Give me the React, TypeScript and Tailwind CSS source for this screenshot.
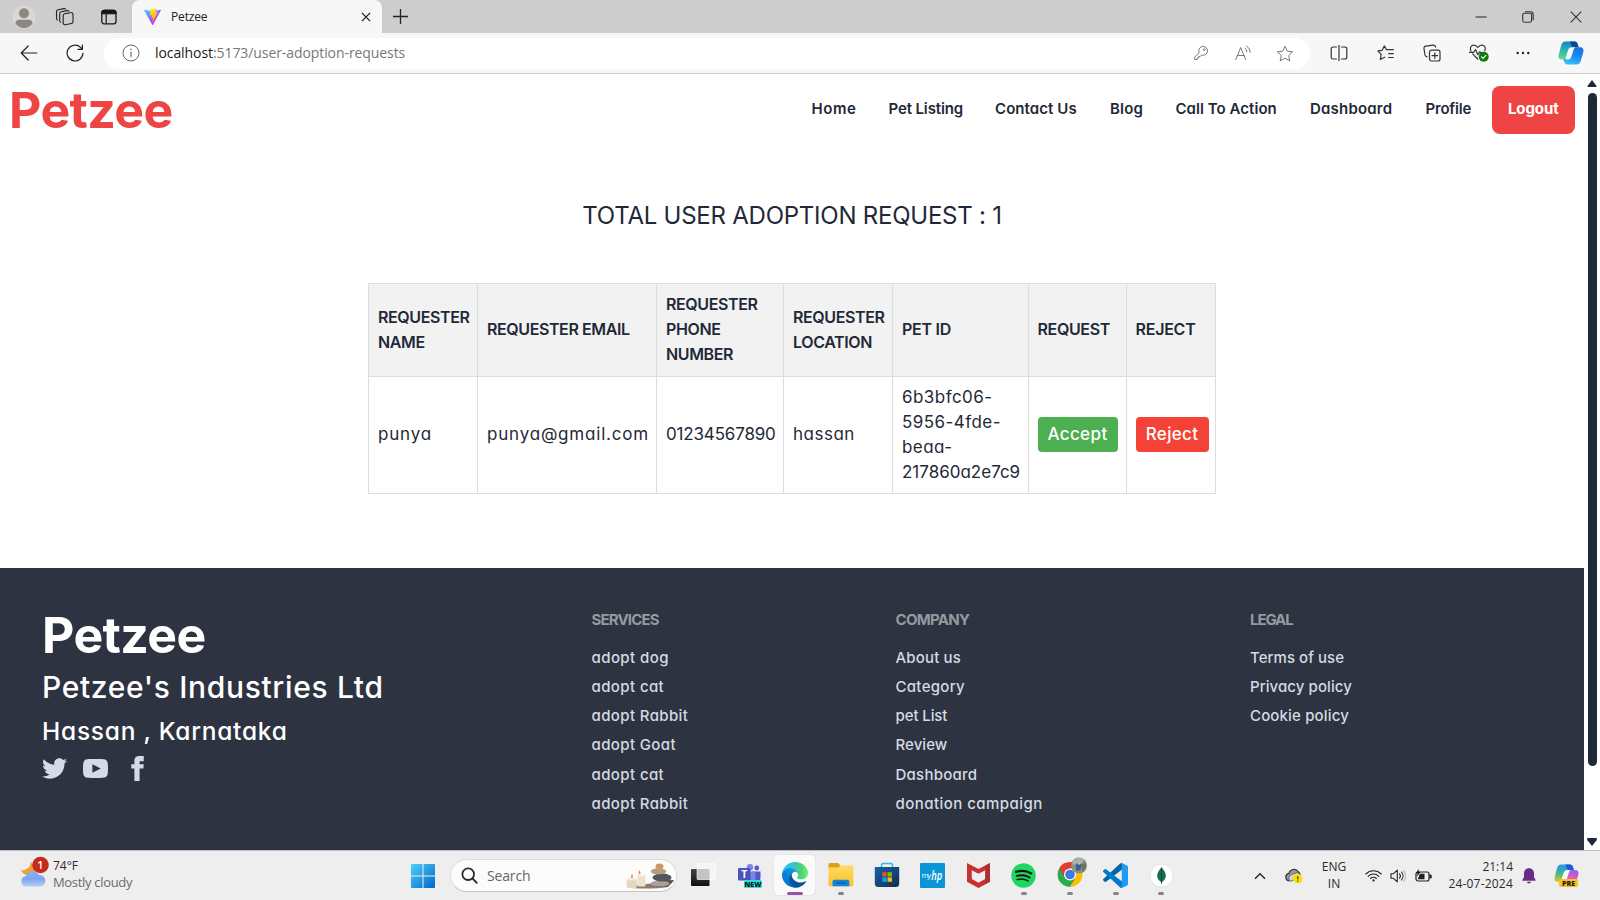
import type { ReactNode } from 'react';

const ui = "font-['Open_Sans','Noto_Sans',sans-serif]";

const navLinks = [
  { label: 'Home', cls: 'w-[77px] tracking-[0.6px]' },
  { label: 'Pet Listing', cls: 'w-[106.5px] tracking-[-0.13px]' },
  { label: 'Contact Us', cls: 'w-[115px] tracking-[0.08px]' },
  { label: 'Blog', cls: 'w-[65.5px] tracking-[0.2px]' },
  { label: 'Call To Action', cls: 'w-[134.5px] tracking-[0.05px]' },
  { label: 'Dashboard', cls: 'w-[115.5px] tracking-[0.2px]' },
  { label: 'Profile', cls: 'w-[66px] tracking-[-0.2px]' },
];

const headings = [
  { label: 'REQUESTER NAME', cls: 'w-[109px] tracking-[-0.38px]' },
  { label: 'REQUESTER EMAIL', cls: 'w-[179px] tracking-[-0.4px]' },
  { label: 'REQUESTER PHONE NUMBER', cls: 'w-[127px] tracking-[-0.38px]' },
  { label: 'REQUESTER LOCATION', cls: 'w-[109px] tracking-[-0.38px]' },
  { label: 'PET ID', cls: 'w-[135.5px] tracking-[-0.25px]' },
  { label: 'REQUEST', cls: 'w-[98px] tracking-[-0.35px]' },
  { label: 'REJECT', cls: 'w-[89.5px] tracking-[-0.25px]' },
];

const footerColumns = [
  {
    title: 'SERVICES',
    cls: 'w-[304px]',
    titleCls: 'tracking-[-0.85px]',
    links: [
      { label: 'adopt dog', cls: 'tracking-[0.42px]' },
      { label: 'adopt cat', cls: 'tracking-[0.4px]' },
      { label: 'adopt Rabbit', cls: 'tracking-[0.38px]' },
      { label: 'adopt Goat', cls: 'tracking-[0.38px]' },
      { label: 'adopt cat', cls: 'tracking-[0.4px]' },
      { label: 'adopt Rabbit', cls: 'tracking-[0.38px]' },
    ],
  },
  {
    title: 'COMPANY',
    cls: 'w-[354.5px]',
    titleCls: 'tracking-[-0.7px]',
    links: [
      { label: 'About us', cls: 'tracking-[0.17px]' },
      { label: 'Category', cls: 'tracking-[0.3px]' },
      { label: 'pet List', cls: 'tracking-[-0.1px]' },
      { label: 'Review', cls: 'tracking-[0.05px]' },
      { label: 'Dashboard', cls: 'tracking-[0.25px]' },
      { label: 'donation campaign', cls: 'tracking-[0.46px]' },
    ],
  },
  {
    title: 'LEGAL',
    cls: '',
    titleCls: 'tracking-[-1.1px]',
    links: [
      { label: 'Terms of use', cls: 'tracking-[0.05px]' },
      { label: 'Privacy policy', cls: 'tracking-[0.07px]' },
      { label: 'Cookie policy', cls: 'tracking-[0.15px]' },
    ],
  },
];

function Slot({ cls, children }: { cls: string; children: ReactNode }) {
  return <div className={`flex shrink-0 items-center justify-center ${cls}`}>{children}</div>;
}

/* ---------- browser icons ---------- */

const line = { fill: 'none', stroke: '#222', strokeWidth: 1.2, strokeLinecap: 'round', strokeLinejoin: 'round' } as const;

function Avatar() {
  return (
    <svg width="24" height="24" viewBox="0 0 24 24">
      <defs>
        <clipPath id="av"><circle cx="12" cy="12" r="11.5" /></clipPath>
      </defs>
      <circle cx="12" cy="12" r="11.5" fill="#dad7d4" />
      <g clipPath="url(#av)" fill="#8b8783">
        <circle cx="12" cy="8.3" r="5" />
        <path d="M3.500 18.500c0-2.200 1.600-3.700 4-3.700h9c2.400 0 4 1.500 4 3.700-1.700 2.700-4.900 4.500-8.500 4.500s-6.800-1.800-8.500-4.500z" />
      </g>
    </svg>
  );
}

function Workspaces() {
  return (
    <svg width="20" height="20" viewBox="0 0 20 20" {...line} strokeWidth={1.1}>
      <path d="M9.600 6.800l6.200-1.200a1.800 1.800 0 0 1 2.200 1.700v7.200a2 2 0 0 1-1.600 2l-6 1.200a1.800 1.800 0 0 1-2.200-1.800V8.800a2 2 0 0 1 1.400-2z" />
      <path d="M5.700 15.300a1.800 1.800 0 0 1-1-1.700V6.800a2 2 0 0 1 1.600-2l5.900-1.200a1.800 1.800 0 0 1 1.700.6" />
      <path d="M2.500 13a1.800 1.800 0 0 1-1-1.700V4.800a2 2 0 0 1 1.600-2L9 1.600a1.800 1.800 0 0 1 1.600.5" />
    </svg>
  );
}

function VerticalTabs() {
  return (
    <svg width="16" height="16" viewBox="0 0 16 16">
      <rect x=".8" y="1.300" width="14.200" height="13.500" rx="2.200" fill="none" stroke="#161616" strokeWidth="1.300" />
      <path d="M.8 4.800V3.500A2.300 2.300 0 0 1 3.100 1.200h9.600A2.300 2.300 0 0 1 15 3.500v1.300z" fill="#161616" stroke="#161616" strokeWidth="1" />
      <path d="M5.200 5v9.500" stroke="#161616" strokeWidth="1.200" />
    </svg>
  );
}

function ViteLogo() {
  return (
    <svg width="17" height="17" viewBox="0 0 256 257">
      <defs>
        <linearGradient id="v1" x1="-.8%" x2="57.600%" y1="7.700%" y2="78.400%">
          <stop offset="0" stopColor="#41d1ff" />
          <stop offset="1" stopColor="#bd34fe" />
        </linearGradient>
        <linearGradient id="v2" x1="43.400%" x2="50.300%" y1="2.200%" y2="89%">
          <stop offset="0" stopColor="#ffea83" />
          <stop offset=".083" stopColor="#ffdd35" />
          <stop offset="1" stopColor="#ffa800" />
        </linearGradient>
      </defs>
      <path fill="url(#v1)" d="M255.153 37.938L134.897 252.976c-2.483 4.440-8.862 4.466-11.382.048L.875 37.958c-2.746-4.814 1.371-10.646 6.827-9.670l120.385 21.517a6.537 6.537 0 0 0 2.322-.004l117.867-21.483c5.438-.991 9.574 4.796 6.877 9.620z" />
      <path fill="url(#v2)" d="M185.432.063L96.440 17.501a3.268 3.268 0 0 0-2.634 3.014l-5.474 92.456a3.268 3.268 0 0 0 3.997 3.378l24.777-5.718c2.318-.535 4.413 1.507 3.936 3.838l-7.361 36.047c-.495 2.426 1.782 4.500 4.151 3.780l15.304-4.649c2.372-.720 4.652 1.360 4.150 3.788l-11.698 56.621c-.732 3.542 3.979 5.473 5.943 2.437l1.313-2.028l72.516-144.720c1.215-2.423-.880-5.186-3.540-4.672l-25.505 4.922c-2.396.462-4.435-1.770-3.759-4.114l16.646-57.705c.677-2.350-1.370-4.583-3.769-4.113z" />
    </svg>
  );
}

function CopilotMark({ size, pre = false }: { size: number; pre?: boolean }) {
  return (
    <svg width={size} height={size} viewBox="0 0 26 26">
      <defs>
        <linearGradient id={pre ? 'cpA' : 'cA'} x1=".3" y1="0" x2=".2" y2="1">
          <stop offset="0" stopColor={pre ? '#1f9bf0' : '#1487c9'} />
          <stop offset=".5" stopColor={pre ? '#43b58c' : '#2cb9b0'} />
          <stop offset="1" stopColor={pre ? '#d9c62c' : '#64d98b'} />
        </linearGradient>
        <linearGradient id={pre ? 'cpB' : 'cB'} x1=".7" y1="0" x2=".4" y2="1">
          <stop offset="0" stopColor={pre ? '#9c5cf2' : '#1a6fe0'} />
          <stop offset=".55" stopColor={pre ? '#e763b4' : '#1e8cf2'} />
          <stop offset="1" stopColor={pre ? '#f79a4a' : '#35c3f4'} />
        </linearGradient>
      </defs>
      <path d="M7.500 1.500h9c2 0 2.700 1.100 3.200 2.700l.9 3.100h-3.400c-1.900 0-2.800 1-3.400 2.800l-2.300 7.200c-.5 1.600-1.500 2.300-3.100 2.300H4.200C1.300 19.600 0 17.600.7 14.700L3.200 5.300C3.900 2.800 5.100 1.500 7.500 1.500z" fill={pre ? 'url(#cpA)' : 'url(#cA)'} />
      <path d="M11.800 1.500h4.700c2 0 2.700 1.100 3.200 2.700l.9 3.100h-3.400c-1.200 0-2 .4-2.600 1.200z" fill={pre ? '#2455d6' : '#0c4a94'} />
      <path d="M18.500 24.500h-9c-2 0-2.700-1.100-3.200-2.700l-.9-2.700h3.400c1.900 0 2.800-1 3.400-2.800l2.300-6.700c.5-1.600 1.500-2.300 3.100-2.300h4.200c2.900 0 4.200 2 3.500 4.900l-2.500 8.500c-.7 2.500-1.900 3.800-4.300 3.800z" fill={pre ? 'url(#cpB)' : 'url(#cB)'} />
      <path d="M14.300 7.300h2.900c-1.200.9-1.600 2.200-2.100 3.900l-1.700 5.300c-.6 1.900-1.700 2.900-3.500 2.900H8.700c-.9 0-1.400-.6-1.100-1.500l2.300-7.300c.7-2.200 2.200-3.300 4.400-3.300z" fill="#f4fbff" />
    </svg>
  );
}

function BrowserTabs() {
  return (
    <div className={`flex h-[33px] bg-[#cdcdcd] ${ui}`}>
      <Slot cls="w-[47px]"><Avatar /></Slot>
      <Slot cls="w-[36px]"><Workspaces /></Slot>
      <Slot cls="w-[49px] pl-0.5"><VerticalTabs /></Slot>
      <div className="flex w-[250px] items-center rounded-t-lg bg-[#f7f7f7] pl-[12px] pr-[11px]">
        <ViteLogo />
        <span className="ml-[10px] text-[12px] leading-none tracking-[-0.15px] text-[#222]">Petzee</span>
        <svg className="ml-auto" width="10" height="10" viewBox="0 0 10 10" stroke="#222" strokeWidth="1.300"><path d="M.9.9l8.200 8.200M9.100.9L.9 9.100" /></svg>
      </div>
      <Slot cls="w-[37px]">
        <svg width="15" height="15" viewBox="0 0 15 15" stroke="#222" strokeWidth="1.300"><path d="M7.500 0v15M0 7.500h15" /></svg>
      </Slot>
      <Slot cls="ml-auto w-[47px]"><svg width="12" height="12" viewBox="0 0 12 12" stroke="#333" strokeWidth="1.100"><path d="M.5 6h11" /></svg></Slot>
      <Slot cls="w-[48px]">
        <svg width="12" height="12" viewBox="0 0 12 12" fill="none" stroke="#333" strokeWidth="1.100">
          <rect x=".7" y="2.300" width="8.900" height="8.900" rx="1.600" />
          <path d="M2.800.8h5.700c1.600 0 2.700 1.100 2.700 2.700v5.800" />
        </svg>
      </Slot>
      <Slot cls="w-[48px]"><svg width="12" height="12" viewBox="0 0 12 12" stroke="#333" strokeWidth="1.100"><path d="M.7.7l10.600 10.600M11.300.7L.7 11.300" /></svg></Slot>
    </div>
  );
}

const star = 'M9 1.200l2.300 5 5.300.6-3.900 3.700 1.100 5.400L9 13.200l-4.800 2.700 1.100-5.400L1.400 6.800l5.300-.6z';

function Toolbar() {
  return (
    <div className={`flex h-[41px] items-center border-b border-[#cfcfcf] bg-[#f7f7f7] ${ui}`}>
      <Slot cls="w-[58px]">
        <svg width="18" height="16" viewBox="0 0 18 16" {...line}><path d="M8.200 1L1.200 8l7 7M1.200 8h15.600" /></svg>
      </Slot>
      <Slot cls="w-[34px]">
        <svg width="18" height="18" viewBox="0 0 18 18" {...line}><path d="M16.900 9.300A7.900 7.900 0 1 1 14.500 3.400L16.200 5.200M16.400 1v4.400H12" /></svg>
      </Slot>
      <div className="ml-[12px] flex h-[31px] w-[1206px] items-center rounded-full bg-white">
        <Slot cls="w-[54px]">
          <svg width="18" height="18" viewBox="0 0 18 18" fill="none" stroke="#666" strokeWidth="1">
            <circle cx="9" cy="9" r="8" />
            <path d="M9 7.800v5" strokeWidth="1.200" />
            <circle cx="9" cy="5.300" r=".8" fill="#666" stroke="none" />
          </svg>
        </Slot>
        <span className="-ml-[3px] text-[14px] leading-none tracking-[-0.08px] text-[#777]">
          <span className="text-[#1b1b1b]">localhost</span>:5173/user-adoption-requests
        </span>
        <Slot cls="ml-auto w-[42px]">
          <svg width="16" height="16" viewBox="0 0 16 16" fill="none" stroke="#777" strokeWidth="1" strokeLinejoin="round">
            <path d="M6.200 7.800a4.400 4.400 0 1 1 2.500 2.200L7.300 11.400H5.800v1.500H4.300v1.500H1.400v-2z" />
            <circle cx="11.300" cy="4.600" r=".9" />
          </svg>
        </Slot>
        <Slot cls="w-[42px]">
          <svg width="17" height="16" viewBox="0 0 17 16" fill="none" stroke="#777" strokeWidth="1" strokeLinecap="round">
            <path d="M.8 14.500L5.700 2.500l4.900 12M2.500 10.500h6.400" />
            <path d="M10.300 3.400a5 5 0 0 1 1.600 3.400M11.700 1a8.300 8.300 0 0 1 3.600 6.400" />
          </svg>
        </Slot>
        <Slot cls="mr-[5px] w-[41px]">
          <svg width="18" height="17" viewBox="0 0 18 17" fill="none" stroke="#777" strokeWidth="1" strokeLinejoin="round"><path d={star} /></svg>
        </Slot>
      </div>
      <Slot cls="ml-[6px] w-[46px]">
        <svg width="18" height="16" viewBox="0 0 18 16" {...line} stroke="#333">
          <path d="M6.400 2H3a1.800 1.800 0 0 0-1.800 1.800v8.400A1.800 1.800 0 0 0 3 14h3.400M11.600 2H15a1.800 1.800 0 0 1 1.800 1.800v8.400A1.800 1.800 0 0 1 15 14h-3.400M9 0v16" />
        </svg>
      </Slot>
      <Slot cls="w-[47px]">
        <svg width="18" height="16" viewBox="0 0 18 16" {...line} stroke="#333">
          <path d="M9.500 4.700L7.300.9 5.200 5.300.9 5.900l3.200 3.400-.8 5.200 4.300-2.300M9.500 4.700h6.800M11.600 8.600h4.700M11.600 12.500h4.700" />
        </svg>
      </Slot>
      <Slot cls="w-[46px]">
        <svg width="18" height="18" viewBox="0 0 18 18" {...line} stroke="#333">
          <rect x="6.500" y="6.200" width="10.500" height="10.800" rx="2" />
          <path d="M11.800 8.800v5.600M9 11.600h5.600M4 12.800C2.600 12.400 2.200 11.800 2 10.900L1 4.500c-.2-1.300.5-2.200 1.700-2.400l7.500-1c1.300-.2 2.200.5 2.500 2" />
        </svg>
      </Slot>
      <Slot cls="w-[46px] pl-0.5">
        <svg width="20" height="18" viewBox="0 0 20 18" {...line} stroke="#333">
          <path d="M2 7C.5 3.600 2.300 1.200 4.900 1.200c1.900 0 2.900 1 3.900 2.300 1-1.300 2-2.300 3.900-2.300 2.600 0 4.500 2.400 3 5.500M3.600 9.800l5.200 5.200M.5 8.300h4.300l1.700-2.800 2.400 5.200 1.800-3 .8.900h3" />
          <circle cx="14.700" cy="12.700" r="5" fill="#0f7b0f" stroke="none" />
          <path d="M12.500 12.800l1.500 1.500 2.900-2.900" stroke="#fff" />
        </svg>
      </Slot>
      <Slot cls="w-[43px]">
        <svg width="14" height="4" viewBox="0 0 14 4" fill="#222"><circle cx="1.700" cy="2" r="1.200" /><circle cx="7" cy="2" r="1.200" /><circle cx="12.300" cy="2" r="1.200" /></svg>
      </Slot>
      <Slot cls="w-[54px]"><CopilotMark size={26} /></Slot>
    </div>
  );
}

/* ---------- page ---------- */

function Navbar() {
  return (
    <header className="flex h-[72px] items-center pl-[9px]">
      <a className="text-[50px] font-bold leading-none tracking-[-0.6px] text-[#ef4444]">Petzee</a>
      <nav className="ml-auto mr-[9px] flex items-center text-[15px] font-semibold text-[#1f2937]">
        {navLinks.map((l) => (
          <a key={l.label} className={`-mt-px whitespace-nowrap ${l.cls}`}>{l.label}</a>
        ))}
        <button className="h-[48px] w-[83.500px] rounded-lg bg-[#ef4444] pb-px text-[15px] font-bold tracking-[-0.1px] text-white">Logout</button>
      </nav>
    </header>
  );
}

const cell = 'border border-[#dddddd] pl-[9px] pr-[7px] text-left align-middle';

function Requests() {
  return (
    <main className="h-[422px] pt-[52px]">
      <h1 className="text-center text-[24px] leading-[36px] tracking-[-0.24px] text-[#1f2937]">TOTAL USER ADOPTION REQUEST : 1</h1>
      <table className="ml-[368px] mt-[49px] w-[847px] table-fixed border-collapse text-[#1f2937]">
        <thead>
          <tr className="h-[92.500px] bg-[#f2f2f2] text-[16px] font-semibold leading-[25px]">
            {headings.map((h) => (
              <th key={h.label} className={`${cell} font-semibold ${h.cls}`}>{h.label}</th>
            ))}
          </tr>
        </thead>
        <tbody>
          <tr className="h-[117px] text-[17px] leading-[25px]">
            <td className={`${cell} tracking-[0.8px]`}>punya</td>
            <td className={`${cell} whitespace-nowrap tracking-[0.8px]`}>punya@gmail.com</td>
            <td className={`${cell} whitespace-nowrap tracking-[-0.17px]`}>01234567890</td>
            <td className={`${cell} tracking-[0.5px]`}>hassan</td>
            <td className={`${cell} whitespace-nowrap tracking-[0.45px]`}>
              <div>6b3bfc06-</div>
              <div>5956-4fde-</div>
              <div>beaa-</div>
              <div className="tracking-[0px]">217860a2e7c9</div>
            </td>
            <td className={cell}>
              <button className="block h-[35px] w-[80px] rounded bg-[#4caf50] font-medium tracking-[0.4px] text-white">Accept</button>
            </td>
            <td className={`${cell} pl-[8px]`}>
              <button className="block h-[35px] w-[73px] rounded bg-[#f44336] font-medium tracking-[0.31px] text-white">Reject</button>
            </td>
          </tr>
        </tbody>
      </table>
    </main>
  );
}

function Footer() {
  return (
    <footer className="flex h-[282px] bg-[#2d3340] pl-[42px] text-white">
      <div className="w-[549.500px] pt-[42px]">
        <div className="text-[50px] font-bold leading-[50px] tracking-[-0.6px]">Petzee</div>
        <div className="mt-[8px] text-[30px] font-medium leading-[38px] tracking-[0.65px]">Petzee's Industries Ltd</div>
        <div className="mt-[7px] text-[24.500px] font-medium leading-[36px] tracking-[0.75px]">Hassan , Karnataka</div>
        <div className="mt-[7px] flex gap-[16.300px] text-[#d5dbe5]">
          <svg width="25" height="25" viewBox="0 0 24 24" fill="currentColor">
            <path d="M24 4.557c-.883.392-1.832.656-2.828.775 1.017-.609 1.798-1.574 2.165-2.724-.951.564-2.005.974-3.127 1.195-.897-.957-2.178-1.555-3.594-1.555-3.179 0-5.515 2.966-4.797 6.045-4.091-.205-7.719-2.165-10.148-5.144-1.290 2.213-.669 5.108 1.523 6.574-.806-.026-1.566-.247-2.229-.616-.054 2.281 1.581 4.415 3.949 4.890-.693.188-1.452.232-2.224.084.626 1.956 2.444 3.379 4.600 3.419-2.070 1.623-4.678 2.348-7.290 2.040 2.179 1.397 4.768 2.212 7.548 2.212 9.142 0 14.307-7.721 13.995-14.646.962-.695 1.797-1.562 2.457-2.549z" />
          </svg>
          <svg width="25" height="25" viewBox="0 0 24 24" fill="currentColor">
            <path d="M19.615 3.184c-3.604-.246-11.631-.245-15.230 0-3.897.266-4.356 2.620-4.385 8.816.029 6.185.484 8.549 4.385 8.816 3.600.245 11.626.246 15.230 0 3.897-.266 4.356-2.620 4.385-8.816-.029-6.185-.484-8.549-4.385-8.816zm-10.615 12.816v-8l8 3.993-8 4.007z" />
          </svg>
          <svg width="25" height="25" viewBox="0 0 24 24" fill="currentColor">
            <path d="M9 8h-3v4h3v12h5v-12h3.642l.358-4h-4v-1.667c0-.955.192-1.333 1.115-1.333h2.885v-5h-3.808c-3.596 0-5.192 1.583-5.192 4.615v3.385z" />
          </svg>
        </div>
      </div>
      {footerColumns.map((c) => (
        <div key={c.title} className={`whitespace-nowrap pt-[42px] text-[15px] ${c.cls}`}>
          <h2 className={`mb-[13px] font-bold leading-[20px] text-[#969aa0] ${c.titleCls}`}>{c.title}</h2>
          {c.links.map((l, i) => (
            <div key={i} className={`h-[29.150px] font-medium leading-[30px] text-[#d5dae3] ${l.cls}`}>{l.label}</div>
          ))}
        </div>
      ))}
    </footer>
  );
}

function Scrollbar() {
  return (
    <div className="flex w-[16px] flex-col items-center bg-white pb-[4px] pt-[6px]">
      <svg width="10" height="7" viewBox="0 0 10 7" fill="#1f2937"><path d="M5 0L9.500 6v1h-9V6z" /></svg>
      <div className="mt-[6px] h-[673px] w-[9px] rounded-full bg-[#1f2937]" />
      <svg className="mt-auto" width="10" height="8" viewBox="0 0 10 8" fill="#1f2937"><path d="M5 8L9.800 2V0H.2v2z" /></svg>
    </div>
  );
}

/* ---------- taskbar ---------- */

function TaskbarApp({ children, mark = '', tile = false }: { children?: ReactNode; mark?: string; tile?: boolean }) {
  return (
    <div className="flex w-[45.800px] shrink-0 justify-center">
      <div className={`mt-[4px] flex h-[40px] w-[41px] flex-col items-center rounded ${tile ? 'bg-[#fafafa] shadow-[0_0_1px_#aaa]' : ''}`}>
        <div className="flex h-[37px] items-center justify-center pt-[3px]">{children}</div>
        <div className={`h-[3px] rounded-full ${mark}`} />
      </div>
    </div>
  );
}

const dot = 'w-[6px] bg-[#858585]';

function Weather() {
  return (
    <svg width="29" height="32" viewBox="0 0 29 32">
      <defs><linearGradient id="cl" x1="0" y1="0" x2="0" y2="1"><stop offset="0" stopColor="#8bb0ee" /><stop offset=".5" stopColor="#7ea6ee" /><stop offset="1" stopColor="#b4cffa" /></linearGradient></defs>
      <path d="M10.500 5.500c.7 5-3 9-9.500 8.800 1.500 3 4 5 8 5s6-2 7-6z" fill="#f0a02c" />
      <path d="M6 30.500a5.200 5.200 0 0 1-.3-10.300A7.300 7.300 0 0 1 19 19a5.800 5.800 0 0 1 1.500 11.500z" fill="url(#cl)" />
      <circle cx="20.500" cy="9" r="8.300" fill="#c42b1c" />
      <text x="20.500" y="13" fontSize="11" fontWeight="600" fill="#fff" textAnchor="middle" fontFamily="Open Sans">1</text>
    </svg>
  );
}

function WindowsLogo() {
  return (
    <svg width="24" height="24" viewBox="0 0 24 24">
      <defs><linearGradient id="wn" gradientUnits="userSpaceOnUse" x1="0" y1="0" x2="24" y2="24"><stop offset="0" stopColor="#4fd0fb" /><stop offset="1" stopColor="#0067c7" /></linearGradient></defs>
      <path fill="url(#wn)" d="M1 0h10.500v11.500H0V1a1 1 0 0 1 1-1zM12.500 0H23a1 1 0 0 1 1 1v10.500H12.500zM0 12.500h11.500V24H1a1 1 0 0 1-1-1zM12.500 12.500H24V23a1 1 0 0 1-1 1H12.500z" />
    </svg>
  );
}

function SearchArt() {
  return (
    <svg width="48" height="26" viewBox="0 0 48 26">
      <path d="M1 24.500c10-3 20-4 27-4l10-6 10 3-6 6.500c-12 2-30 2-41 .5z" fill="#8d7c69" />
      <path d="M34 17l14 .5-6 6-12 .5z" fill="#5c5148" />
      <rect x=".8" y="16" width="10" height="9" rx="1" fill="#e3d6bd" />
      <rect x="11.500" y="12" width="8" height="11.500" rx="1" fill="#ece1cb" />
      <ellipse cx="5.800" cy="16.300" rx="5" ry="1.300" fill="#f3ead8" />
      <ellipse cx="15.500" cy="12.300" rx="4" ry="1.100" fill="#f6eee0" />
      <path d="M6 11c1.300 2 1.400 4 0 4.500-1.400-.5-1.300-2.500 0-4.500zM13.500 7c1.300 2 1.400 4 0 4.500-1.400-.5-1.300-2.500 0-4.500z" fill="#f08b3e" />
      <ellipse cx="34" cy="20.500" rx="9.500" ry="3" fill="#a8a29b" />
      <ellipse cx="36" cy="14.500" rx="9.500" ry="4" fill="#53565c" />
      <ellipse cx="32.500" cy="8.300" rx="7.800" ry="3" fill="#b59d80" />
      <ellipse cx="33.500" cy="3.500" rx="4" ry="3" fill="#c79b63" />
    </svg>
  );
}

function TaskView() {
  return (
    <svg width="26" height="26" viewBox="0 0 26 26">
      <defs><linearGradient id="tv" x1="0" y1="0" x2="0" y2="1"><stop offset="0" stopColor="#424242" /><stop offset="1" stopColor="#111" /></linearGradient></defs>
      <rect x="1" y="7" width="18.500" height="17" rx="1" fill="url(#tv)" />
      <rect x="7" y="1.500" width="18.500" height="16" rx="1" fill="#f5f5f5" stroke="#fff" strokeWidth=".6" />
      <path d="M7.300 7h12.200v10.200H7.300z" fill="#c4c4c4" />
    </svg>
  );
}

function Teams() {
  return (
    <svg width="25" height="25" viewBox="0 0 25 25">
      <circle cx="13" cy="4.200" r="3.200" fill="#7b83eb" />
      <circle cx="19.800" cy="5" r="2.400" fill="#5059c9" />
      <path d="M15 8.500h8.500v6.500a5 5 0 0 1-5 5H15z" fill="#5059c9" />
      <path d="M8 8.500h10.500v7a5.200 5.200 0 0 1-10.500 0z" fill="#7b83eb" />
      <rect x="1" y="5" width="12.500" height="12.500" rx="1" fill="#4b53bc" />
      <text x="7.200" y="15" fontSize="10.500" fontWeight="700" fill="#fff" textAnchor="middle" fontFamily="Open Sans">T</text>
      <rect x="7" y="17" width="18" height="8" rx="1.500" fill="#2ee0d8" />
      <text x="16" y="23.700" fontSize="7" fontWeight="800" fill="#111" textAnchor="middle" fontFamily="Open Sans">NEW</text>
    </svg>
  );
}

function Edge() {
  return (
    <svg width="26" height="26" viewBox="0 0 256 256">
      <defs>
        <linearGradient id="e1" gradientUnits="userSpaceOnUse" x1="63" y1="177" x2="241" y2="177"><stop offset="0" stopColor="#0c59a4" /><stop offset="1" stopColor="#114a8b" /></linearGradient>
        <linearGradient id="e2" gradientUnits="userSpaceOnUse" x1="157" y1="100" x2="46" y2="221"><stop offset="0" stopColor="#1b9de2" /><stop offset=".16" stopColor="#1595df" /><stop offset=".67" stopColor="#0680d7" /><stop offset="1" stopColor="#0078d4" /></linearGradient>
        <linearGradient id="e3" gradientUnits="userSpaceOnUse" x1="10" y1="90" x2="240" y2="90"><stop offset="0" stopColor="#35c1f1" /><stop offset=".35" stopColor="#2fc2df" /><stop offset=".75" stopColor="#48d07a" /><stop offset="1" stopColor="#66eb6e" /></linearGradient>
      </defs>
      <path fill="url(#e1)" d="M231 190.500c-3.400 1.800-6.900 3.400-10.500 4.700a101.700 101.700 0 0 1-35.900 6.500c-47.300 0-88.500-32.500-88.500-74.300 0-11.400 6.400-21.900 16.400-27.300-42.800 1.800-53.800 46.400-53.800 72.500 0 73.900 68.100 81.400 82.800 81.400 7.900 0 19.800-2.300 27-4.600l1.300-.4a128.300 128.300 0 0 0 66.600-52.800c2.200-3.500-1.800-7.600-5.400-5.700z" />
      <path fill="url(#e2)" d="M105.700 241.400A79.200 79.200 0 0 1 83 220.100a80.700 80.700 0 0 1 29.500-120c3.200-1.500 8.500-4.100 15.600-4a32.400 32.400 0 0 1 25.700 13 31.900 31.900 0 0 1 6.300 18.700c0-.2 24.500-79.600-80-79.600-43.900 0-80 41.700-80 78.200 0 23.200 4.900 36.700 12.500 52.400a128 128 0 0 0 156.800 67.100 75.500 75.500 0 0 1-63.700-4.500z" />
      <path fill="url(#e3)" d="M152.300 148.900c-.8 1-3.300 2.500-3.300 5.700 0 2.600 1.700 5.100 4.700 7.200 14.400 10 41.500 8.700 41.600 8.700 10.700 0 21.100-2.900 30.300-8.300a61.400 61.400 0 0 0 30.400-52.900c.3-22.400-8-37.300-11.300-43.900C223.500 23.900 177.700 0 128 0A128 128 0 0 0 0 126.200c.5-36.500 36.800-66 80-66 3.500 0 23.500.3 42 10 16.300 8.600 24.900 18.900 30.800 29.200 6.200 10.700 7.300 24.100 7.300 29.500 0 5.300-2.700 13.300-7.800 20z" />
    </svg>
  );
}

function Folder() {
  return (
    <svg width="26" height="26" viewBox="0 0 26 26">
      <defs><linearGradient id="fo" x1="0" y1="0" x2="0" y2="1"><stop offset="0" stopColor="#ffdc62" /><stop offset="1" stopColor="#f8c02f" /></linearGradient></defs>
      <path d="M.5 2.500A1.500 1.500 0 0 1 2 1h8l2.200 2.300V7H.5z" fill="#dc9f17" />
      <path d="M.5 5.500h10l2-2H24a1.300 1.300 0 0 1 1.300 1.300V23A1.300 1.300 0 0 1 24 24.300H1.800A1.300 1.300 0 0 1 .5 23z" fill="url(#fo)" />
      <path d="M4.500 24.300v-4.500a2 2 0 0 1 2-2h12.800a2 2 0 0 1 2 2v4.500z" fill="#1583d2" />
      <path d="M8 21h10" stroke="#0c5da5" strokeWidth="1.500" />
    </svg>
  );
}

function Store() {
  return (
    <svg width="26" height="26" viewBox="0 0 26 26">
      <defs><linearGradient id="st" x1="0" y1="0" x2="1" y2="1"><stop offset="0" stopColor="#1562a8" /><stop offset="1" stopColor="#152b54" /></linearGradient></defs>
      <path d="M7.500 6V3a1.500 1.500 0 0 1 1.500-1.500h8A1.500 1.500 0 0 1 18.500 3v3" fill="none" stroke="#35b4ee" strokeWidth="1.500" />
      <path d="M.8 5h24.400v16.500a3.500 3.500 0 0 1-3.500 3.500H4.300a3.500 3.500 0 0 1-3.500-3.500z" fill="url(#st)" />
      <path d="M8.300 10.200h4.400v4.400H8.300z" fill="#f25022" /><path d="M13.500 10.200h4.400v4.400h-4.400z" fill="#7fba00" />
      <path d="M8.300 15.400h4.400v4.400H8.300z" fill="#00a4ef" /><path d="M13.500 15.400h4.400v4.400h-4.400z" fill="#ffb900" />
    </svg>
  );
}

function MyHp() {
  return (
    <svg width="25" height="25" viewBox="0 0 25 25">
      <rect width="25" height="25" rx="1" fill="#0a96d6" />
      <text x="1.500" y="15.200" fontSize="7.500" fill="#fff" fontFamily="Open Sans" textLength="9.500">my</text>
      <text x="11.300" y="16.500" fontSize="13" fontWeight="600" fill="#fff" fontStyle="italic" fontFamily="Open Sans" textLength="11" lengthAdjust="spacingAndGlyphs">hp</text>
    </svg>
  );
}

function McAfee() {
  return (
    <svg width="23" height="25" viewBox="0 0 23 25">
      <path d="M0 0l11.500 6L23 0v18.700L11.500 25 0 18.700z" fill="#c8302f" />
      <path d="M4.800 7.200l6.700 3.500 6.700-3.500v8.900l-6.700 3.600-6.700-3.600z" fill="#eee" />
      <path d="M18.200 2.500L23 0v18.700l-4.800 2.600z" fill="#9e2a2f" opacity=".55" />
    </svg>
  );
}

function Spotify() {
  return (
    <svg width="25" height="25" viewBox="0 0 25 25">
      <circle cx="12.500" cy="12.500" r="12.200" fill="#1ed760" />
      <g fill="none" stroke="#10180f" strokeLinecap="round">
        <path d="M5.200 8.900c5-1.500 10.700-1 15 1.500" strokeWidth="2.300" />
        <path d="M5.800 12.900c4.500-1.300 9-.7 12.800 1.600" strokeWidth="1.900" />
        <path d="M6.300 16.600c3.800-1 7.500-.6 10.800 1.300" strokeWidth="1.600" />
      </g>
    </svg>
  );
}

function Chrome() {
  return (
    <svg width="31" height="31" viewBox="0 0 31 31">
      <path d="M13 17.500L2.200 11.300A12.500 12.500 0 0 0 13 30l6-9z" fill="#2da94f" />
      <path d="M13 17.500V11.300h10.900A12.500 12.500 0 0 1 13 30l5.500-9.500z" fill="#fdbd00" />
      <path d="M13 11.300h10.900A12.500 12.500 0 0 0 2.200 11.300L7.600 20.600 13 17.500z" fill="#e33b2e" />
      <circle cx="13" cy="17.500" r="6" fill="#fff" />
      <circle cx="13" cy="17.500" r="4.800" fill="#3c79e6" />
      <circle cx="22" cy="8.500" r="8" fill="#87967c" />
      <path d="M15 6a8 8 0 0 1 12-3.500L24 8l-5 1z" fill="#a5b3bb" />
      <path d="M18.500 8l3-4 3 3.500-1 5.500-4 1z" fill="#3b5ca8" />
      <path d="M24.500 7l4-1a8 8 0 0 1-3.500 9z" fill="#6a7355" />
      <circle cx="22" cy="6" r="1.700" fill="#d9b79a" />
    </svg>
  );
}

function VsCode() {
  return (
    <svg width="25" height="25" viewBox="0 0 100 100">
      <path d="M96.500 10.700L75.900.8a6.200 6.200 0 0 0-7.100 1.200L1.300 63.600a4.200 4.200 0 0 0 0 6.200l5.500 5a4.200 4.200 0 0 0 5.300.2L93.400 13.300A4.100 4.100 0 0 1 100 16.600v-.2a6.200 6.200 0 0 0-3.500-5.700z" fill="#0065a9" />
      <path d="M96.500 89.300l-20.600 9.900a6.200 6.200 0 0 1-7.100-1.200L1.300 36.400a4.200 4.200 0 0 1 0-6.200l5.500-5a4.200 4.200 0 0 1 5.300-.2l81.300 61.700a4.100 4.100 0 0 0 6.600-3.300v.2a6.200 6.200 0 0 1-3.500 5.700z" fill="#007acc" />
      <path d="M75.900 99.100a6.200 6.200 0 0 1-7.100-1.200 3.700 3.700 0 0 0 6.200-2.600V4.700A3.700 3.700 0 0 0 68.800 2 6.200 6.200 0 0 1 75.900.9l20.600 9.900a6.200 6.200 0 0 1 3.500 5.600v67.200a6.200 6.200 0 0 1-3.500 5.600z" fill="#1f9cf0" />
    </svg>
  );
}

function Mongo() {
  return (
    <svg width="25" height="25" viewBox="0 0 25 25">
      <circle cx="12.500" cy="12.500" r="11.500" fill="#fff" stroke="#e0e0e0" strokeWidth=".8" />
      <path d="M12.500 4.500c2.500 2.700 4.300 5 4.300 8.300 0 3-1.800 5-4.300 6.700-2.500-1.700-4.300-3.700-4.300-6.700 0-3.300 1.800-5.600 4.300-8.300z" fill="#13704a" />
      <path d="M12.500 4.500v16" stroke="#0a4630" strokeWidth="1" />
    </svg>
  );
}

function Taskbar() {
  return (
    <div className={`flex h-[50px] border-t border-[#bdbdbd] bg-[#eeeeee] text-[#2b2b2b] ${ui}`}>
      <div className="flex w-[400px] pl-[20px]">
        <div className="mt-[5px]"><Weather /></div>
        <div className="ml-[4px] mt-[6px] text-[12px] leading-[17px]">
          <div>74°F</div>
          <div className="text-[13px] tracking-[-0.32px] text-[#6a6a6a]">Mostly cloudy</div>
        </div>
      </div>
      <Slot cls="w-[46px]"><WindowsLogo /></Slot>
      <div className="ml-[4px] mt-[8px] flex h-[33px] w-[227px] items-center rounded-full border border-[#dcdcdc] border-b-[#c4c4c4] bg-[#fcfcfc] pl-[10px]">
        <svg width="17" height="17" viewBox="0 0 17 17" fill="none" stroke="#2a2a2a" strokeWidth="1.800" strokeLinecap="round"><circle cx="7.200" cy="7.200" r="5.800" /><path d="M11.500 11.500l4.300 4.300" /></svg>
        <span className="ml-[9px] text-[14px] leading-none tracking-[-0.15px] text-[#666]">Search</span>
        <div className="ml-auto mr-[2px]"><SearchArt /></div>
      </div>
      <div className="ml-[3.500px] flex">
        <TaskbarApp><TaskView /></TaskbarApp>
        <TaskbarApp><Teams /></TaskbarApp>
        <TaskbarApp tile mark="w-[16px] bg-[#9b4fb5]"><Edge /></TaskbarApp>
        <TaskbarApp mark={dot}><Folder /></TaskbarApp>
        <TaskbarApp><Store /></TaskbarApp>
        <TaskbarApp><MyHp /></TaskbarApp>
        <TaskbarApp><McAfee /></TaskbarApp>
        <TaskbarApp mark={dot}><Spotify /></TaskbarApp>
        <TaskbarApp mark={dot}><div className="-mt-[5px] ml-[6px]"><Chrome /></div></TaskbarApp>
        <TaskbarApp mark={dot}><VsCode /></TaskbarApp>
        <TaskbarApp mark={dot}><Mongo /></TaskbarApp>
      </div>
      <div className="ml-auto flex items-center">
        <Slot cls="w-[32px]"><svg width="12" height="8" viewBox="0 0 12 8" fill="none" stroke="#222" strokeWidth="1.400"><path d="M1 6.800l5-5 5 5" /></svg></Slot>
        <Slot cls="w-[35px]">
          <svg width="18" height="16" viewBox="0 0 18 16">
            <path d="M4.500 13a3.900 3.900 0 0 1-.6-7.700A5.300 5.300 0 0 1 13.500 4c1.200 1 1.500 2 1.500 3L8 12.500z" fill="#9a9a9a" />
            <path d="M4.500 13a3.900 3.900 0 0 1-.6-7.700A5.300 5.300 0 0 1 13.500 4c1.200 1 1.500 2 1.500 3" fill="none" stroke="#333" strokeWidth="1.200" />
            <path d="M5 13a4 4 0 0 1 1.500-6.500l6.500-2.200 2 3L7 13z" fill="#d4d4d4" stroke="#555" strokeWidth=".8" />
            <circle cx="12.800" cy="10.800" r="4.700" fill="#fce100" />
            <path d="M12.800 8.200v3.300M12.800 12.500v1.200" stroke="#333" strokeWidth="1.200" />
          </svg>
        </Slot>
        <div className="w-[46px] text-center text-[12px] leading-[16.500px]"><div>ENG</div><div>IN</div></div>
        <Slot cls="w-[32px]">
          <svg width="17" height="13" viewBox="0 0 17 13" fill="none" stroke="#222" strokeWidth="1.100" strokeLinecap="round">
            <path d="M.8 5a10.800 10.800 0 0 1 15.400 0M3.200 7.300a7.400 7.400 0 0 1 10.600 0M5.600 9.500a4 4 0 0 1 5.800 0" /><circle cx="8.500" cy="11.400" r="1.100" fill="#222" stroke="none" />
          </svg>
        </Slot>
        <Slot cls="w-[18px]">
          <svg width="16" height="14" viewBox="0 0 16 14" fill="none" stroke="#222" strokeWidth="1.100" strokeLinejoin="round" strokeLinecap="round">
            <path d="M1 4.700h2.500L7.300 1.200v11.600L3.500 9.300H1z" /><path d="M9.500 4.800a3.300 3.300 0 0 1 0 4.400M11.500 3a6 6 0 0 1 0 8" /><path d="M13.500 1.300a8.500 8.500 0 0 1 0 11.400" stroke="#bbb" />
          </svg>
        </Slot>
        <Slot cls="w-[32px]">
          <svg width="17" height="13" viewBox="0 0 17 13">
            <rect x="1" y="3" width="13" height="9" rx="2" fill="none" stroke="#222" strokeWidth="1.200" />
            <path d="M2.800 10.300l2-5.500h4.700v5.500zM14.500 5.500h1.200a1 1 0 0 1 1 1v2a1 1 0 0 1-1 1h-1.200z" fill="#222" />
            <path d="M3.800 0L.8 4.200h1.900L1.800 7.500 5.500 3H3.600z" fill="#111" />
          </svg>
        </Slot>
        <div className="w-[74px] text-right text-[12px] leading-[16.500px]"><div>21:14</div><div className="-ml-1 tracking-[0.2px]">24-07-2024</div></div>
        <Slot cls="w-[32px]">
          <svg width="14" height="16" viewBox="0 0 14 16" fill="#6b2a86"><path d="M7 .3c3 0 5 2.200 5 5v4l1.500 2.500c.3.600 0 1-.6 1H1.100c-.6 0-.9-.4-.6-1L2 9.300v-4c0-2.800 2-5 5-5zM4.800 13.800h4.400a2.300 2.300 0 0 1-4.400 0z" /></svg>
        </Slot>
        <Slot cls="relative w-[44px] pr-[1px]">
          <CopilotMark size={25} pre />
          <span className="absolute left-[14px] top-[16px] flex h-[8px] w-[19px] items-center justify-center rounded-[2px] bg-[#fcc21b] text-[7px] font-extrabold leading-none text-[#222]">PRE</span>
        </Slot>
        <div className="w-[11px]" />
      </div>
    </div>
  );
}

export default function App() {
  return (
    <div className="flex h-[900px] w-[1600px] flex-col overflow-hidden bg-white">
      <BrowserTabs />
      <Toolbar />
      <div className="flex h-[776px]">
        <div className="w-[1584px] font-['Inter',sans-serif] [font-feature-settings:'cv11']">
          <Navbar />
          <Requests />
          <Footer />
        </div>
        <Scrollbar />
      </div>
      <Taskbar />
    </div>
  );
}
